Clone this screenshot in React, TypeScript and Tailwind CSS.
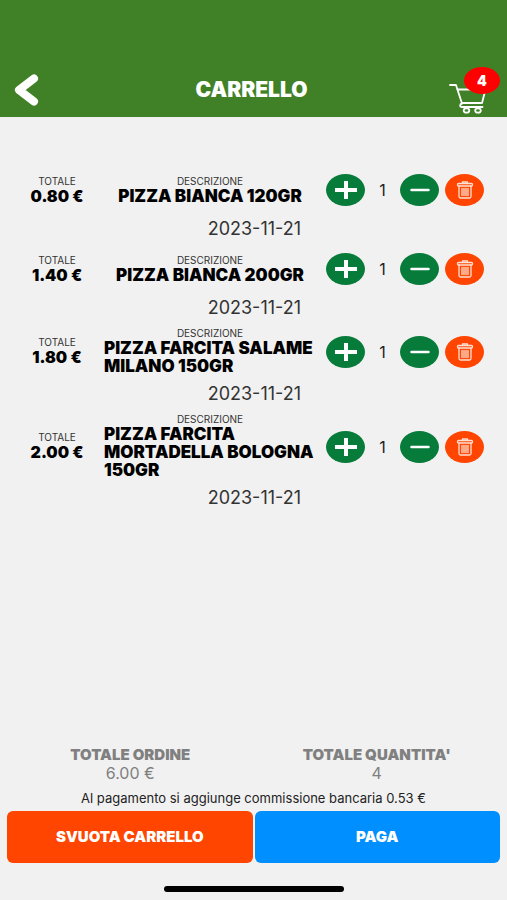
const items = [
  { id: 1, total: "0.80 €", name: "PIZZA BIANCA 120GR", date: "2023-11-21", qty: 1 },
  { id: 2, total: "1.40 €", name: "PIZZA BIANCA 200GR", date: "2023-11-21", qty: 1 },
  { id: 3, total: "1.80 €", name: "PIZZA FARCITA SALAME MILANO 150GR", date: "2023-11-21", qty: 1 },
  { id: 4, total: "2.00 €", name: "PIZZA FARCITA MORTADELLA BOLOGNA 150GR", date: "2023-11-21", qty: 1 },
];

function CartIcon() {
  return (
    <svg width="40" height="32" viewBox="0 0 40 32" fill="none" stroke="white" strokeWidth="1.8" strokeLinecap="round" strokeLinejoin="round">
      <path d="M1 1h6l6 18.500" />
      <path d="M8.500 5.500h28l-3.500 13.500h-20" />
      <path d="M13 19.500c-2.500.5-2.500 3.500 0 3.500h20.500" />
      <ellipse cx="17.500" cy="26.500" rx="2.800" ry="2.200" />
      <ellipse cx="29" cy="26.500" rx="2.800" ry="2.200" />
    </svg>
  );
}

function TrashIcon() {
  return (
    <svg width="18" height="18" viewBox="0 0 18 18" fill="none" stroke="#ffe0d2" strokeWidth="1.3" strokeLinecap="round" strokeLinejoin="round">
      <path d="M6.500 2.500v-1.500h5v1.500" />
      <rect x="1.500" y="2.500" width="15" height="2.500" rx="1" />
      <path d="M3 5v10.500c0 1 .6 1.500 1.500 1.500h9c.9 0 1.500-.5 1.500-1.500V5" />
      <path d="M6 7.500v7M8 7.500v7M10 7.500v7M12 7.500v7" />
    </svg>
  );
}

function CartRow({ item }: { item: (typeof items)[number] }) {
  return (
    <li className="mb-2">
      <div className="flex min-h-10 items-center">
        <div className="w-[104px] shrink-0 pl-[10px] text-center">
          <p className="text-[10px] leading-[11px] text-[#333]">TOTALE</p>
          <p className="text-base leading-[18px] font-black text-black">{item.total}</p>
        </div>
        <div className="flex min-w-0 flex-1 flex-col items-center">
          <p className="text-[10px] leading-[11px] text-[#333]">DESCRIZIONE</p>
          <p className="text-[17px] leading-[18px] font-black text-black">{item.name}</p>
        </div>
        <div className="flex w-[191px] shrink-0 items-center pl-[10px]">
          <button aria-label="Aggiungi" className="flex h-8 w-[39px] items-center justify-center rounded-[50%] bg-[#077b3a]">
            <svg width="22" height="18" viewBox="0 0 22 18" stroke="white" strokeWidth="4">
              <path d="M0 9h22M11 0v18" />
            </svg>
          </button>
          <span className="w-[35px] text-center text-base text-[#222]">{item.qty}</span>
          <button aria-label="Rimuovi" className="flex h-8 w-[39px] items-center justify-center rounded-[50%] bg-[#077b3a]">
            <svg width="20" height="4" viewBox="0 0 20 4" stroke="white" strokeWidth="2.5" strokeLinecap="round">
              <path d="M1.500 2h17" />
            </svg>
          </button>
          <button aria-label="Elimina" className="ml-[6px] flex h-8 w-[39px] items-center justify-center rounded-[50%] bg-[#ff4500]">
            <TrashIcon />
          </button>
        </div>
      </div>
      <p className="mt-[7px] pr-[206px] text-right text-[18px] leading-6 text-[#333]">{item.date}</p>
    </li>
  );
}

export default function App() {
  return (
    <div className="flex min-h-screen flex-col bg-[#f1f1f1] font-['Inter',sans-serif]">
      <header className="flex items-center bg-[#408127] pt-[64px] pb-px">
        <div className="flex h-[52px] flex-1 items-center pl-[14px]">
          <button aria-label="Indietro">
            <svg width="26" height="34" viewBox="0 0 26 34" fill="none" stroke="white" strokeWidth="8" strokeLinecap="round" strokeLinejoin="round">
              <path d="M20 5.500L5 17l15 11.500" />
            </svg>
          </button>
        </div>
        <h1 className="text-[21px] font-black text-white">CARRELLO</h1>
        <div className="flex h-[52px] flex-1 items-end justify-end pr-[18px]">
          <a href="#" aria-label="Carrello" className="relative">
            <CartIcon />
            <span className="absolute -top-[17px] -right-[11px] flex h-[27px] w-9 items-center justify-center rounded-[50%] bg-[#ff0000] text-sm font-black text-white">
              4
            </span>
          </a>
        </div>
      </header>

      <ul className="pt-[53px]">
        {items.map((item) => (
          <CartRow key={item.id} item={item} />
        ))}
      </ul>

      <footer className="mt-auto px-[7px] pb-2">
        <div className="grid grid-cols-2 text-center text-[#808080]">
          <div>
            <p className="text-[15px] leading-[18px] font-black">TOTALE ORDINE</p>
            <p className="text-base leading-[18px]">6.00 €</p>
          </div>
          <div>
            <p className="text-[15px] leading-[18px] font-black">TOTALE QUANTITA'</p>
            <p className="text-base leading-[18px]">4</p>
          </div>
        </div>
        <p className="mt-2 text-center text-[13px] leading-4 text-[#222]">
          Al pagamento si aggiunge commissione bancaria 0.53 €
        </p>
        <div className="mt-[5px] grid grid-cols-2 gap-[2px] text-[15px] font-black text-white">
          <button className="h-[52px] rounded-md bg-[#ff4500]">SVUOTA CARRELLO</button>
          <button className="h-[52px] rounded-md bg-[#008fff]">PAGA</button>
        </div>
        <div className="mx-auto mt-[23px] h-[6px] w-[180px] rounded-full bg-black" />
      </footer>
    </div>
  );
}
